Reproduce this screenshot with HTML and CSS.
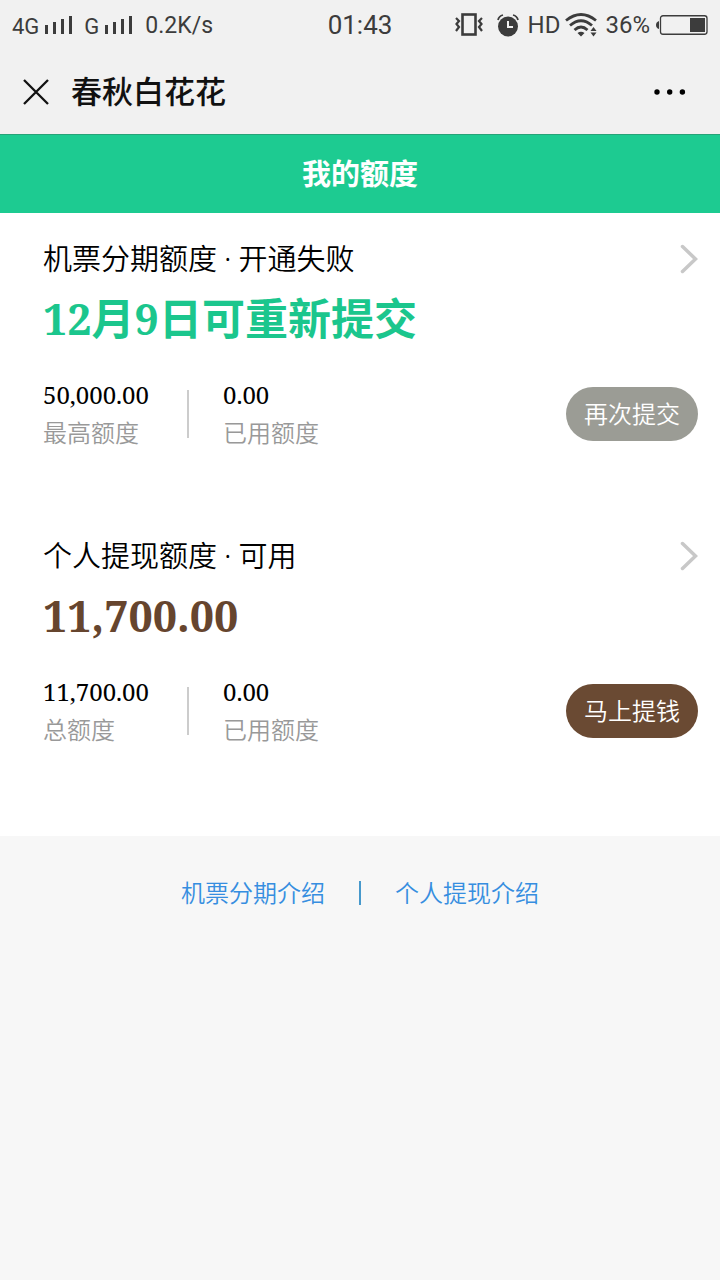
FILE: index.html
```html
<!DOCTYPE html>
<html lang="zh-CN">
<head>
<meta charset="utf-8">
<meta name="viewport" content="width=device-width, initial-scale=1">
<title>春秋白花花</title>
<link rel="stylesheet" href="styles.css">
</head>
<body>
<div class="status">
  <div class="status-side">
    <span class="net">4G</span>
    <svg class="signal" width="28" height="18" viewBox="0 0 28 18"><path d="M0 9h3v9H0zM8 6h3v12H8zM16 3h3v15h-3zM24 0h3v18h-3z"/></svg>
    <span class="net second">G</span>
    <svg class="signal" width="28" height="18" viewBox="0 0 28 18"><path d="M0 9h3v9H0zM8 6h3v12H8zM16 3h3v15h-3zM24 0h3v18h-3z"/></svg>
    <span class="speed">0.2K/s</span>
  </div>
  <time class="clock">01:43</time>
  <div class="status-side end">
    <svg width="28" height="24" viewBox="0 0 28 24" fill="none" stroke="#3c3c3c"><rect x="7.500" y="1.500" width="13" height="20" stroke-width="2.600"/><path d="M1 5l3 3-2.500 3L4 14l-3 4M27 5l-3 3 2.500 3-2.500 3 3 4" stroke-width="2.200"/></svg>
    <svg class="alarm" width="22" height="23" viewBox="0 0 22 23" fill="none" stroke="#3c3c3c"><circle cx="11" cy="12.500" r="10" fill="#3c3c3c" stroke="none"/><path d="M1 6q1-4 5-5M21 6q-1-4-5-5" stroke-width="1.800"/><path d="M11 7v6h5" stroke="#f1f1f1" stroke-width="2"/></svg>
    <span class="hd">HD</span>
    <svg class="wifi" width="32" height="24" viewBox="0 0 32 24" fill="none" stroke="#3c3c3c" stroke-width="2.800"><path d="M1 7.500Q16-4.500 31 7.500M5 12.500Q16 3 27 12.500M9.500 17Q16 11 22.500 17"/><path d="M12.500 20q3.500-2.500 7 0L16 23.500zM25.500 18l3-4 3 4zM25.500 19.500h6l-3 4z" fill="#3c3c3c" stroke="none"/></svg>
    <span class="percent">36%</span>
    <svg class="battery" width="52" height="20" viewBox="0 0 52 20"><path d="M3 6v8q-3-1-3-4t3-4z" fill="#3c3c3c"/><rect x="4.500" y=".75" width="46.500" height="18.500" rx="2.500" fill="none" stroke="#3c3c3c" stroke-width="1.300"/><path d="M34 3h15v14H34z" fill="#3c3c3c"/></svg>
  </div>
</div>
<header class="nav">
  <button class="icon-button" aria-label="关闭"><svg width="26" height="26" viewBox="0 0 26 26"><path d="M1 1l24 24M25 1L1 25" stroke="#111" stroke-width="2.300"/></svg></button>
  <div class="nav-title">春秋白花花</div>
  <button class="icon-button" aria-label="更多"><svg width="32" height="6" viewBox="0 0 32 6"><circle cx="3" cy="3" r="2.700"/><circle cx="15.700" cy="3" r="2.700"/><circle cx="28.400" cy="3" r="2.700"/></svg></button>
</header>
<h1 class="banner">我的额度</h1>
<main class="accounts">
  <section class="account">
    <a class="account-link" href="#flight">
      <h2 class="account-title">机票分期额度 · 开通失败</h2>
      <svg width="18" height="30" viewBox="0 0 18 30"><path d="M2.500 2.500L15.500 15l-13 12.500" fill="none" stroke="#c8c8c8" stroke-width="3.500" stroke-linecap="round"/></svg>
    </a>
    <p class="headline">12月9日可重新提交</p>
    <div class="details">
      <dl class="stat"><dt>最高额度</dt><dd>50,000.00</dd></dl>
      <dl class="stat used"><dt>已用额度</dt><dd>0.00</dd></dl>
      <button class="action">再次提交</button>
    </div>
  </section>
  <section class="account cash">
    <a class="account-link" href="#cash">
      <h2 class="account-title">个人提现额度 · 可用</h2>
      <svg width="18" height="30" viewBox="0 0 18 30"><path d="M2.500 2.500L15.500 15l-13 12.500" fill="none" stroke="#c8c8c8" stroke-width="3.500" stroke-linecap="round"/></svg>
    </a>
    <p class="headline">11,700.00</p>
    <div class="details">
      <dl class="stat"><dt>总额度</dt><dd>11,700.00</dd></dl>
      <dl class="stat used"><dt>已用额度</dt><dd>0.00</dd></dl>
      <button class="action">马上提钱</button>
    </div>
  </section>
</main>
<footer class="links">
  <a href="#flight-intro">机票分期介绍</a>
  <span class="divider"></span>
  <a href="#cash-intro">个人提现介绍</a>
</footer>
</body>
</html>
```
FILE: styles.css
```css
* { box-sizing: border-box; }
body {
  margin: 0;
  min-height: 100vh;
  background: #f7f7f7;
  color: #000;
  font-family: "Noto Serif", "Noto Sans CJK SC", serif;
  font-weight: 350;
}
h1, h2, p, dl, dd { margin: 0; }
button { border: 0; padding: 0; font: inherit; cursor: pointer; }
a { text-decoration: none; color: inherit; }
svg { display: block; flex: none; }

.status {
  display: grid;
  grid-template-columns: 1fr auto 1fr;
  align-items: center;
  height: 50px;
  padding: 0 12px;
  background: #f1f1f1;
  color: #3c3c3c;
  font-family: Roboto, sans-serif;
  font-weight: 400;
  white-space: nowrap;
}
.status-side { display: flex; align-items: center; }
.end { justify-content: flex-end; }
.net { font-size: 22px; line-height: 24px; padding-top: 4px; margin-right: 6px; }
.second { margin-left: 11px; }
.signal { fill: #3c3c3c; }
.speed { font-size: 23px; margin-left: 12px; }
.clock { font-size: 26px; }
.alarm { margin-left: 14px; }
.hd { font-size: 24px; margin-left: 9px; }
.wifi { margin-left: 5px; }
.percent { font-size: 24px; margin: 0 6px 0 8px; }

.nav {
  display: flex;
  align-items: center;
  height: 84px;
  padding: 0 34px 0 23px;
  background: #f1f1f1;
}
.nav-title {
  flex: 1;
  margin-left: 22px;
  padding-bottom: 4px;
  font-family: "Noto Sans CJK SC", sans-serif;
  font-size: 31px;
  line-height: 44px;
  font-weight: 500;
  color: #111;
}
.icon-button { background: none; }

.banner {
  padding-bottom: 4px;
  border-top: 1px solid #27a378;
  background: #1dcb91;
  color: #fff;
  text-align: center;
  font-family: "Noto Sans CJK SC", sans-serif;
  font-size: 29px;
  line-height: 74px;
  font-weight: 700;
}
.accounts { background: #fff; padding-bottom: 29px; }
.account { padding: 24px 22px 58px 43px; }
.account-link { display: flex; align-items: center; justify-content: space-between; }
.account-title {
  font-size: 29px;
  line-height: 44px;
  font-weight: 350;
}
.headline {
  font-size: 43px;
  line-height: 60px;
  margin-top: 8px;
  font-weight: 700;
  color: #1bc68d;
}
.cash .headline { color: #66452e; }
.details { display: flex; align-items: center; margin-top: 27px; }
.stat { display: flex; flex-direction: column-reverse; min-width: 144px; }
.stat dt { font-size: 24px; line-height: 38px; color: #999; }
.stat dd {
  font-size: 24px;
  line-height: 38px;
  font-weight: 400;
}
.used { position: relative; padding-left: 36px; }
.used::before {
  content: "";
  position: absolute;
  left: 0;
  top: 14px;
  bottom: 14px;
  width: 2px;
  background: #ccc;
}
.action {
  margin-left: auto;
  padding: 0 18px;
  border-radius: 27px;
  background: #9b9c95;
  color: #fff;
  font-size: 24px;
  line-height: 54px;
}
.cash .action { background: #6a4a33; }
.links {
  display: flex;
  justify-content: center;
  align-items: center;
  gap: 34px;
  padding: 38px 20px;
  color: #368ee0;
  font-size: 24px;
  line-height: 38px;
}
.divider { width: 2px; height: 24px; background: #4799cc; }
```
